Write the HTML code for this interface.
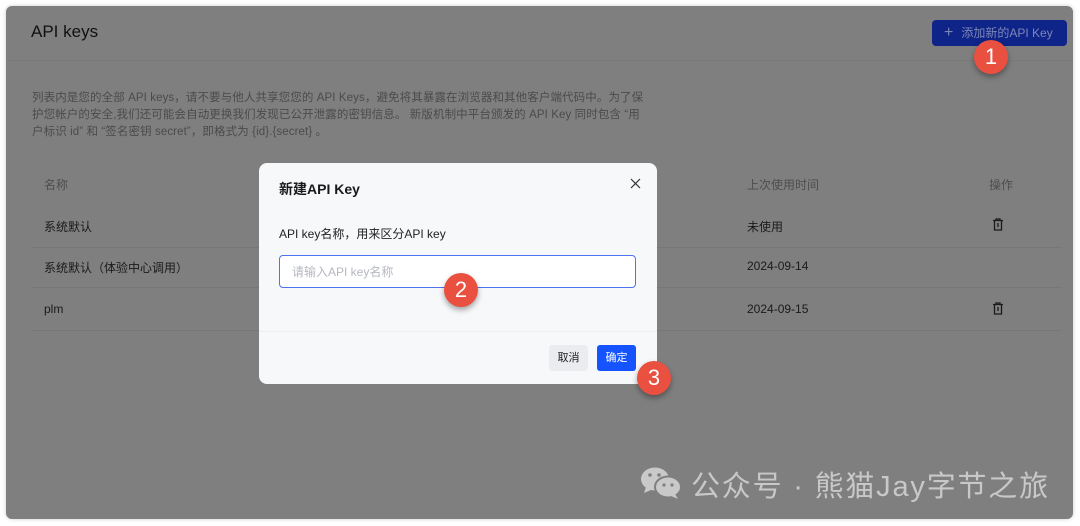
<!DOCTYPE html>
<html><head><meta charset="utf-8"><style>
*{margin:0;padding:0;box-sizing:border-box}
body{width:1080px;height:526px;background:#fff;position:relative;overflow:hidden;font-family:"Liberation Sans","Noto Sans CJK SC",sans-serif}
.panel{position:absolute;left:6px;top:6px;width:1067px;height:513px;background:#7f7f7f;border-radius:6px;box-shadow:0 0 4px rgba(0,0,0,.2)}
.abs{position:absolute;white-space:nowrap}
.hline{position:absolute;height:1px;background:#777}
.badge{position:absolute;width:34px;height:34px;border-radius:50%;background:#e9503f;color:#fff;font-size:22px;text-align:center;line-height:34px;box-shadow:0 3px 6px rgba(0,0,0,.35);font-family:"Liberation Sans",sans-serif}
.modal{position:absolute;left:259px;top:163px;width:398px;height:221px;background:#f7f8fa;border-radius:8px}
</style></head><body>
<div class="panel"></div>
<div class="abs" style="left:31px;top:22px;font-size:17px;color:#111">API keys</div>
<div class="hline" style="left:6px;top:60px;width:1067px;background:#7a7a7a"></div>
<div class="abs" style="left:932px;top:20px;width:135px;height:26px;background:#0f2488;border-radius:4px;color:#7d86b8;font-size:12px;line-height:26px;padding-left:12px"><span style="font-size:16px;margin-right:8px">+</span>添加新的API Key</div>
<div class="abs" style="left:32px;top:90px;font-size:11.5px;color:#4b4b4b;line-height:17px;white-space:normal;width:614px;letter-spacing:0.1px">列表内是您的全部 API keys，请不要与他人共享您您的 API Keys，避免将其暴露在浏览器和其他客户端代码中。为了保护您帐户的安全,我们还可能会自动更换我们发现已公开泄露的密钥信息。 新版机制中平台颁发的 API Key 同时包含 “用户标识 id” 和 “签名密钥 secret”，即格式为 {id}.{secret} 。</div>
<div class="abs" style="left:44px;top:176px;font-size:12px;color:#4e4e4e">名称</div>
<div class="abs" style="left:747px;top:176px;font-size:12px;color:#4e4e4e">上次使用时间</div>
<div class="abs" style="left:989px;top:176px;font-size:12px;color:#4e4e4e">操作</div>
<div class="abs" style="left:44px;top:218px;font-size:12px;color:#1a1a1a">系统默认</div>
<div class="abs" style="left:747px;top:218px;font-size:12px;color:#1a1a1a">未使用</div>
<div class="abs" style="left:44px;top:259px;font-size:12px;color:#1a1a1a">系统默认（体验中心调用）</div>
<div class="abs" style="left:747px;top:259px;font-size:12px;color:#1a1a1a">2024-09-14</div>
<div class="abs" style="left:44px;top:302px;font-size:12px;color:#1a1a1a">plm</div>
<div class="abs" style="left:747px;top:302px;font-size:12px;color:#1a1a1a">2024-09-15</div>
<div class="hline" style="left:32px;top:247px;width:1030px"></div>
<div class="hline" style="left:32px;top:287px;width:1030px"></div>
<div class="hline" style="left:32px;top:330px;width:1030px"></div>
<svg class="abs" style="left:992px;top:218px" width="12" height="13" viewBox="0 0 12 13" fill="none" stroke="#1a1a1a" stroke-width="1.3"><path d="M1 2.5h10M4 2.5V1h4v1.5M2.5 2.5v9.5h7V2.5M6 5v4"/></svg>
<svg class="abs" style="left:992px;top:302px" width="12" height="13" viewBox="0 0 12 13" fill="none" stroke="#1a1a1a" stroke-width="1.3"><path d="M1 2.5h10M4 2.5V1h4v1.5M2.5 2.5v9.5h7V2.5M6 5v4"/></svg>
<div class="modal"></div>
<div class="abs" style="left:279px;top:179px;font-size:14px;font-weight:bold;color:#1a1a1a">新建API Key</div>
<svg class="abs" style="left:630px;top:178px" width="11" height="11" viewBox="0 0 11 11" stroke="#333" stroke-width="1.2"><path d="M1 1l9 9M10 1l-9 9"/></svg>
<div class="abs" style="left:279px;top:225px;font-size:12px;color:#222">API key名称，用来区分API key</div>
<div class="abs" style="left:279px;top:255px;width:357px;height:33px;border:1px solid #4f72f0;border-radius:4px;background:#fff"></div>
<div class="abs" style="left:292px;top:263px;font-size:12px;color:#b5b8c0">请输入API key名称</div>
<div class="hline" style="left:259px;top:331px;width:398px;background:#eceef2"></div>
<div class="abs" style="left:549px;top:345px;width:39px;height:26px;background:#ebecf0;border-radius:3px;font-size:11px;color:#222;text-align:center;line-height:26px">取消</div>
<div class="abs" style="left:597px;top:345px;width:39px;height:26px;background:#1553ff;border-radius:3px;font-size:11px;color:#fff;text-align:center;line-height:26px">确定</div>
<div class="badge" style="left:974px;top:40px">1</div>
<div class="badge" style="left:444px;top:273px">2</div>
<div class="badge" style="left:637px;top:361px">3</div>
<svg class="abs" style="left:640px;top:466px" width="44" height="34" viewBox="0 0 44 34"><ellipse cx="15" cy="13" rx="14" ry="11.5" fill="#c9c9c9"/><path d="M6 21l-2 6 7-3z" fill="#c9c9c9"/><ellipse cx="28" cy="21" rx="13" ry="10.5" fill="#c9c9c9" stroke="#7f7f7f" stroke-width="2"/><path d="M35 28l3 5-7-3z" fill="#c9c9c9"/><circle cx="10" cy="9" r="1.8" fill="#7f7f7f"/><circle cx="19" cy="9" r="1.8" fill="#7f7f7f"/><circle cx="24" cy="19" r="1.6" fill="#7f7f7f"/><circle cx="32" cy="19" r="1.6" fill="#7f7f7f"/></svg>
<div class="abs" style="left:691px;top:463px;font-size:29px;color:#c8c8c8;letter-spacing:1.8px;font-family:'Liberation Sans','Noto Sans CJK SC',sans-serif">公众号 · 熊猫Jay字节之旅</div>
</body></html>
